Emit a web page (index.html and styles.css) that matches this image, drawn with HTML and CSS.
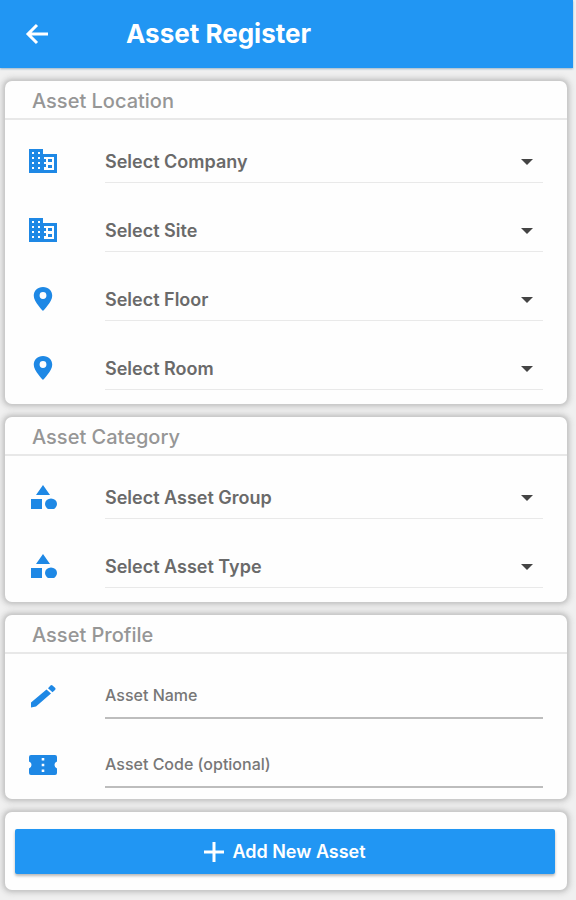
FILE: index.html
```html
<!DOCTYPE html>
<html lang="en">
<head>
<meta charset="utf-8">
<meta name="viewport" content="width=device-width, initial-scale=1">
<title>Asset Register</title>
<link rel="stylesheet" href="styles.css">
</head>
<body>
<svg class="sprite" aria-hidden="true">
  <symbol id="building" viewBox="0 0 28 24">
    <path fill="currentColor" fill-rule="evenodd" d="M0 0H14V5H28V24H0ZM15 8V10H17V13H15V15H17V18H15V21H25V8ZM3 3V5H5V3ZM9 3V5H11V3ZM3 8V10H5V8ZM9 8V10H11V8ZM3 13V15H5V13ZM9 13V15H11V13ZM3 18V20H5V18ZM9 18V20H11V18ZM19 10H23V13H19ZM19 16H23V19H19Z"/>
  </symbol>
  <symbol id="pin" viewBox="0 0 28 26">
    <path fill="currentColor" fill-rule="evenodd" d="M14 0C8 0 4 4 4 9.500C4 16 14 26 14 26S24 16 24 9.500C24 4 20 0 14 0ZM14 5.500A3.700 3.700 0 1 1 14 12.900A3.700 3.700 0 0 1 14 5.500Z"/>
  </symbol>
  <symbol id="shapes" viewBox="0 0 28 24">
    <path fill="currentColor" d="M14 0L21 10H7ZM2 14H13V24H2Z"/>
    <ellipse cx="22" cy="19" rx="6" ry="5.500" fill="currentColor"/>
  </symbol>
  <symbol id="pencil" viewBox="0 0 28 24">
    <path fill="currentColor" d="M2 18.500L17.500 5.500L22 9.500L7 22.500L2 23.500ZM19 4.200L21.500 1.500Q22.500 .5 23.500 1.500L26.300 4Q27 5 26 6L23.500 8.200Z"/>
  </symbol>
  <symbol id="ticket" viewBox="0 0 28 20">
    <path fill="currentColor" fill-rule="evenodd" d="M2 0H26Q28 0 28 2V6.500Q25.500 7.500 25.500 10T28 13.500V18Q28 20 26 20H2Q0 20 0 18V13.500Q2.500 12.500 2.500 10T0 6.500V2Q0 0 2 0ZM12.700 3V5.600H15.300V3ZM12.700 8.700V11.300H15.300V8.700ZM12.700 14.400V17H15.300V14.400Z"/>
  </symbol>
</svg>

<header class="app-bar">
  <button class="back" type="button" aria-label="Back">
    <svg width="24" height="22" viewBox="0 0 24 22" fill="none" stroke="currentColor" stroke-width="3"><path d="M23 11H3M12 2L3 11L12 20"/></svg>
  </button>
  <h1>Asset Register</h1>
</header>

<form class="cards">
  <section class="card">
    <h2>Asset Location</h2>
    <div class="fields">
      <label class="row"><svg class="icon"><use href="#building"/></svg><span class="pick"><select aria-label="Company"><option>Select Company</option></select></span></label>
      <label class="row"><svg class="icon"><use href="#building"/></svg><span class="pick"><select aria-label="Site"><option>Select Site</option></select></span></label>
      <label class="row"><svg class="icon"><use href="#pin"/></svg><span class="pick"><select aria-label="Floor"><option>Select Floor</option></select></span></label>
      <label class="row"><svg class="icon"><use href="#pin"/></svg><span class="pick"><select aria-label="Room"><option>Select Room</option></select></span></label>
    </div>
  </section>

  <section class="card">
    <h2>Asset Category</h2>
    <div class="fields">
      <label class="row"><svg class="icon"><use href="#shapes"/></svg><span class="pick"><select aria-label="Asset Group"><option>Select Asset Group</option></select></span></label>
      <label class="row"><svg class="icon"><use href="#shapes"/></svg><span class="pick"><select aria-label="Asset Type"><option>Select Asset Type</option></select></span></label>
    </div>
  </section>

  <section class="card">
    <h2>Asset Profile</h2>
    <div class="fields fields-text">
      <label class="row"><svg class="icon"><use href="#pencil"/></svg><input type="text" aria-label="Asset Name" placeholder="Asset Name"></label>
      <label class="row"><svg class="icon"><use href="#ticket"/></svg><input type="text" aria-label="Asset Code" placeholder="Asset Code (optional)"></label>
    </div>
  </section>

  <section class="card actions">
    <button class="add" type="button">
      <svg width="20" height="20" viewBox="0 0 20 20" fill="none" stroke="currentColor" stroke-width="3"><path d="M10 0V20M0 10H20"/></svg>
      Add New Asset
    </button>
  </section>
</form>
</body>
</html>
```
FILE: styles.css
```css
* {
  box-sizing: border-box;
}

body {
  margin: 0;
  background: #f0f0f0;
  color: #6a6a6a;
  font-family: Inter, Roboto, sans-serif;
}

button,
input,
select {
  font: inherit;
}

.sprite {
  display: none;
}

.app-bar {
  display: flex;
  align-items: center;
  height: 68px;
  margin-right: 3px;
  padding-left: 25px;
  background: #2196f3;
  color: #fff;
  box-shadow: 0 1px 2px #9bb4c8;
}

.back {
  display: flex;
  width: 101px;
  padding: 0;
  border: 0;
  background: none;
  color: inherit;
}

h1 {
  margin: 0;
  font-size: 26px;
  line-height: 32px;
  font-weight: 700;
}

.cards {
  display: grid;
  gap: 13px;
  padding: 13px 9px 10px 5px;
}

.card {
  border-radius: 7px;
  background: #fefefe;
  box-shadow: 0 0 3px 2px #c8c8c8, 0 0 4px 5px #dfdfdf;
}

h2 {
  margin: 0;
  padding: 8px 27px 5px;
  border-bottom: 2px solid #e8e8e8;
  color: #969696;
  font-size: 20px;
  line-height: 24px;
  font-weight: 500;
}

.fields {
  display: grid;
  gap: 25px;
  padding: 19px 24px 14px;
}

.row {
  display: grid;
  grid-template-columns: 28px 1fr;
  column-gap: 48px;
  align-items: center;
}

.icon {
  width: 28px;
  height: 24px;
  color: #1e88e5;
}

.pick {
  display: flex;
  align-items: center;
  height: 44px;
  padding-top: 2px;
  border-bottom: 1px solid #e9e9e9;
}

.pick::after {
  content: "";
  margin: 0 10px 0 -24px;
  border: 6px solid transparent;
  border-top-color: #444;
  border-bottom: 0;
  pointer-events: none;
}

select {
  flex: 1;
  min-width: 0;
  height: 41px;
  padding: 0;
  border: 0;
  appearance: none;
  background: none;
  color: #6a6a6a;
  font-size: 18px;
  font-weight: 600;
}

.fields-text {
  gap: 23px;
  padding-bottom: 11px;
}

input {
  width: 100%;
  min-width: 0;
  height: 46px;
  padding: 0;
  border: 0;
  border-bottom: 2px solid #bdbdbd;
  border-radius: 0;
  background: none;
  color: #666;
  font-size: 16px;
  font-weight: 500;
}

input::placeholder {
  color: #777;
  opacity: 1;
}

.actions {
  padding: 17px 12px 16px 10px;
}

.add {
  display: flex;
  align-items: center;
  justify-content: center;
  gap: 8px;
  width: 100%;
  height: 45px;
  padding: 0;
  border: 0;
  border-radius: 2px;
  background: #2196f3;
  color: #fff;
  font-size: 18px;
  font-weight: 600;
  box-shadow: 0 2px 3px #b8b8b8;
}
```
